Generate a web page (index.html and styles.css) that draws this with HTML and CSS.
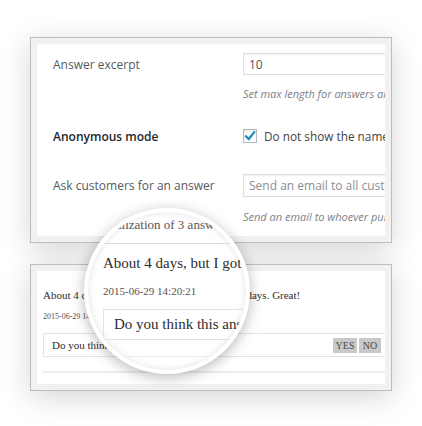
FILE: index.html
```html
<!DOCTYPE html>
<html lang="en">
<head>
<meta charset="utf-8">
<title>Answers settings</title>
<link rel="stylesheet" href="styles.css">
</head>
<body>
<div class="stage">
  <section class="card card-settings">
    <div class="card-inner">
      <div class="row row-excerpt">
        <span class="label">Answer excerpt</span>
        <div class="input">10</div>
      </div>
      <p class="desc desc-1">Set max length for answers and questions</p>
      <div class="row row-anon">
        <span class="label strong">Anonymous mode</span>
        <span class="check">
          <span class="check-box"><svg width="12" height="12" viewBox="0 0 12 12"><path d="M2 6.2 L4.8 9 L10.2 2.2" fill="none" stroke="#1e8cbe" stroke-width="2.2" stroke-linecap="square"/></svg></span>
          <span class="check-text">Do not show the name of the author</span>
        </span>
      </div>
      <div class="row row-ask">
        <span class="label">Ask customers for an answer</span>
        <div class="input placeholder">Send an email to all customers</div>
      </div>
      <p class="desc desc-2">Send an email to whoever purchased the product</p>
    </div>
  </section>

  <section class="card card-answers">
    <div class="card-inner answers-inner">
      <p class="answer">About 4 days, but I got it delivered in about 2 days. Great!</p>
      <p class="date">2015-06-29 14:20:21</p>
      <div class="vote">
        <span class="vote-text">Do you think this answer is useful?</span>
        <span class="vote-btns"><span class="btn btn-yes">YES</span><span class="btn btn-no">NO</span></span>
      </div>
      <div class="sep"></div>
    </div>
  </section>

  <div class="magnifier">
    <p class="mag-caption">Visualization of 3 answers</p>
    <div class="mag-line"></div>
    <p class="mag-answer">About 4 days, but I got it delivered in about 2 days. Great!</p>
    <p class="mag-date">2015-06-29 14:20:21</p>
    <div class="mag-vote">Do you think this answer is useful?</div>
    <div class="mag-line mag-line-low"></div>
  </div>
</div>
</body>
</html>
```

FILE: styles.css
```css
html, body {
  margin: 0;
  padding: 0;
  background: #ffffff;
}

.stage {
  position: relative;
  width: 422px;
  height: 426px;
  overflow: hidden;
  padding-top: 37px;
  box-sizing: border-box;
}

.card {
  margin-left: 30px;
  width: 362px;
  box-sizing: border-box;
  border: 1px solid #bdbdbd;
  background: #f1f1f1;
  padding: 6px;
  box-shadow: 0 6px 28px rgba(0, 0, 0, 0.17);
}

.card-settings {
  height: 206px;
}

.card-answers {
  margin-top: 21px;
  height: 127px;
}

.card-inner {
  background: #ffffff;
  height: 100%;
  overflow: hidden;
  white-space: nowrap;
  display: flex;
  flex-direction: column;
}

/* settings */
.row {
  display: flex;
  align-items: center;
  font-family: "Open Sans", "DejaVu Sans", sans-serif;
  font-size: 12px;
  color: #555a60;
}

.label {
  flex: none;
  width: 190px;
  padding-left: 16px;
}

.label.strong {
  font-weight: 600;
  color: #23282d;
}

.row-excerpt {
  margin-top: 9px;
  height: 22px;
}

.row-anon {
  margin-top: 28px;
  height: 14px;
}

.row-ask {
  margin-top: 31px;
  height: 23px;
}

.input {
  flex: none;
  width: 170px;
  height: 100%;
  box-sizing: border-box;
  border: 1px solid #dedede;
  padding-left: 5px;
  display: flex;
  align-items: center;
  box-shadow: inset 0 1px 2px rgba(0, 0, 0, 0.06);
  color: #50555a;
}

.input.placeholder {
  color: #8a8e93;
}

.check {
  display: flex;
  align-items: center;
}

.check-box {
  width: 14px;
  height: 14px;
  box-sizing: border-box;
  border: 1px solid #b4b9be;
  box-shadow: inset 0 1px 2px rgba(0, 0, 0, 0.1);
  display: flex;
  align-items: center;
  justify-content: center;
  background: #fff;
}

.check-text {
  margin-left: 7px;
  color: #444;
  font-size: 11.8px;
}

.desc {
  margin: 0 0 0 206px;
  font-family: "Open Sans", "DejaVu Sans", sans-serif;
  font-style: italic;
  font-size: 11px;
  line-height: 14px;
  color: #7c8187;
}

.desc-1 {
  margin-top: 12px;
}

.desc-2 {
  margin-top: 13px;
}

/* answers */
.answers-inner {
  padding-left: 6px;
  font-family: "Liberation Serif", "Times New Roman", serif;
  color: #2c2c2c;
}

.answer {
  margin: 17px 0 0;
  font-size: 11px;
  line-height: 14px;
}

.date {
  margin: 10px 0 0;
  font-size: 8px;
  line-height: 10px;
  color: #5b5050;
}

.vote {
  margin-top: 11px;
  height: 24px;
  width: 347px;
  box-sizing: border-box;
  border: 1px solid #e4e4e4;
  padding: 0 8px;
  display: flex;
  align-items: center;
  justify-content: space-between;
  font-size: 11px;
  flex: none;
}

.vote-btns {
  display: flex;
  gap: 2px;
}

.btn {
  height: 15px;
  background: #c9c9c9;
  color: #4a4a4a;
  font-size: 10px;
  line-height: 15px;
  text-align: center;
}

.btn-yes { width: 24px; }
.btn-no { width: 22px; }

.sep {
  margin-top: 14px;
  height: 2px;
  width: 347px;
  background: #ececec;
  flex: none;
}

/* magnifier lens */
.magnifier {
  position: absolute;
  left: 84px;
  top: 208px;
  width: 166px;
  height: 166px;
  box-sizing: border-box;
  border: 4px solid #ffffff;
  border-radius: 50%;
  background: #ffffff;
  overflow: hidden;
  white-space: nowrap;
  padding-left: 15px;
  font-family: "Liberation Serif", "Times New Roman", serif;
  color: #2c2c2c;
  box-shadow: 0 3px 14px rgba(0, 0, 0, 0.28), inset 0 0 7px rgba(0, 0, 0, 0.12);
}

.mag-caption {
  margin: 5px 0 0 -11px;
  font-size: 13px;
  line-height: 16px;
  color: #555;
}

.mag-line {
  margin: 10px 0 0 -15px;
  height: 1px;
  width: 200px;
  background: #dcdcdc;
}

.mag-answer {
  margin: 10px 0 0;
  font-size: 15px;
  line-height: 18px;
}

.mag-date {
  margin: 12px 0 0;
  font-size: 11px;
  line-height: 14px;
  color: #5b5050;
}

.mag-vote {
  margin-top: 11px;
  height: 31px;
  width: 240px;
  box-sizing: border-box;
  border: 1px solid #e2e2e2;
  padding-left: 10px;
  display: flex;
  align-items: center;
  font-size: 15px;
}

.mag-line-low {
  margin-top: 16px;
  background: #ececec;
}
```
